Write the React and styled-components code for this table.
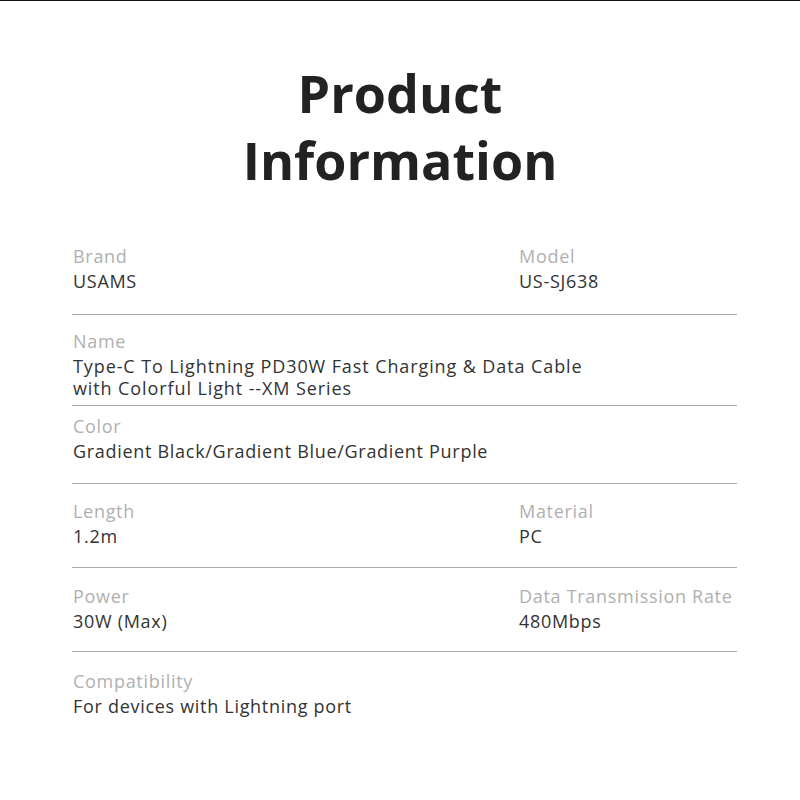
import React from "react";
import styled, { createGlobalStyle } from "styled-components";

const Global = createGlobalStyle`
  html, body { margin: 0; padding: 0; background: #ffffff; }
  body { font-family: "Open Sans", "Liberation Sans", sans-serif; }
`;

const Page = styled.div`
  width: 800px;
  height: 800px;
  box-sizing: border-box;
  border-top: 1px solid #111;
  padding-top: 58px;
  background: #fff;
`;

const Title = styled.h1`
  margin: 0;
  text-align: center;
  font-family: "Open Sans", sans-serif;
  font-weight: 700;
  font-size: 52px;
  line-height: 67px;
  color: #222222;
`;

const Table = styled.div`
  margin: 52px 0 0 72px;
  width: 665px;
`;

const Row = styled.div`
  display: grid;
  grid-template-columns: 446px 1fr;
  padding: ${(p) => p.$pt}px 0 ${(p) => p.$pb}px;
  border-bottom: ${(p) => (p.$last ? "none" : "1px solid #ababab")};
`;

const Cell = styled.div`
  padding-left: 1px;
  grid-column: ${(p) => (p.$wide ? "1 / span 2" : "auto")};
`;

const Label = styled.div`
  font-size: 18px;
  line-height: 22px;
  letter-spacing: 0.7px;
  color: #b0b0b0;
  margin-bottom: 3px;
  white-space: nowrap;
`;

const Value = styled.div`
  font-size: 18px;
  line-height: 22px;
  letter-spacing: ${(p) => (p.$wideSpacing ? "0.9px" : "0.7px")};
  color: #333333;
  white-space: nowrap;
`;

const rows = [
  { pt: 0, pb: 22, cells: [["Brand", "USAMS"], ["Model", "US-SJ638"]] },
  {
    pt: 15,
    pb: 6,
    wide: true,
    cells: [["Name", ["Type-C To Lightning PD30W Fast Charging & Data Cable", "with Colorful Light --XM Series"]]],
  },
  { pt: 9, pb: 21, wide: true, cells: [["Color", "Gradient Black/Gradient Blue/Gradient Purple"]] },
  { pt: 16, pb: 20, cells: [["Length", "1.2m"], ["Material", "PC"]] },
  { pt: 17, pb: 19, cells: [["Power", "30W (Max)"], ["Data Transmission Rate", "480Mbps"]] },
  { pt: 18, pb: 0, last: true, wide: true, cells: [["Compatibility", "For devices with Lightning port"]] },
];

export default function App() {
  return (
    <>
      <Global />
      <Page>
        <Title>
          Product
          <br />
          Information
        </Title>
        <Table>
          {rows.map((r, i) => (
            <Row key={i} $pt={r.pt} $pb={r.pb} $last={r.last}>
              {r.cells.map(([label, value]) => (
                <Cell key={label} $wide={r.wide}>
                  <Label>{label}</Label>
                  {Array.isArray(value) ? (
                    value.map((line) => (
                      <Value key={line} $wideSpacing>
                        {line}
                      </Value>
                    ))
                  ) : (
                    <Value>{value}</Value>
                  )}
                </Cell>
              ))}
            </Row>
          ))}
        </Table>
      </Page>
    </>
  );
}
